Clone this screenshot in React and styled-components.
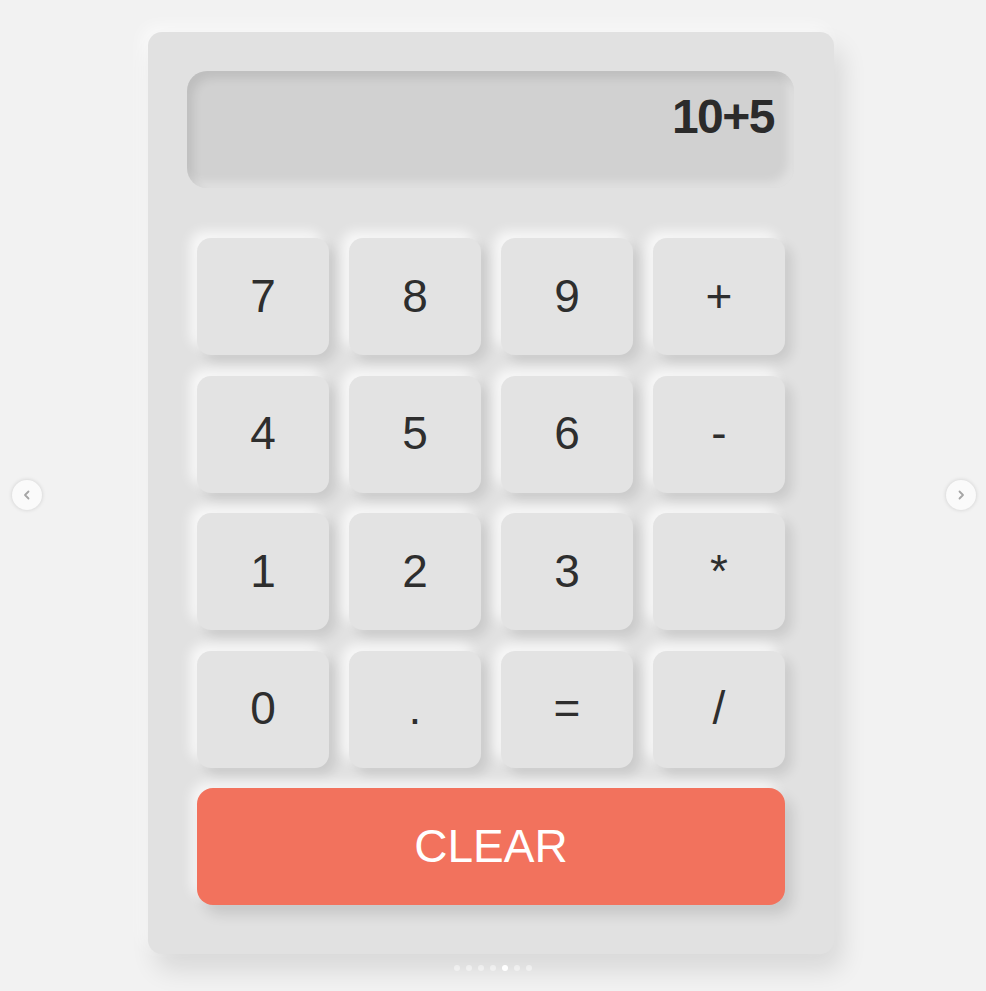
import React from "react";
import styled, { createGlobalStyle } from "styled-components";

const GlobalStyle = createGlobalStyle`
  html, body {
    margin: 0;
    padding: 0;
    background: #f2f2f2;
    font-family: "Liberation Sans", Arial, sans-serif;
  }
`;

const Page = styled.div`
  position: relative;
  width: 986px;
  height: 991px;
  display: flex;
  flex-direction: column;
  align-items: center;
  padding: 32px 4px 0 0;
  box-sizing: border-box;
  overflow: hidden;
`;

const Calculator = styled.div`
  width: 686px;
  box-sizing: border-box;
  padding: 39px 40px 49px 39px;
  background: #e1e1e1;
  border-radius: 14px;
  box-shadow: 8px 16px 26px rgba(0, 0, 0, 0.11),
    -6px -6px 16px rgba(255, 255, 255, 0.6);
`;

const Display = styled.div`
  height: 117px;
  box-sizing: border-box;
  border-radius: 20px;
  background: #d1d1d1;
  box-shadow: inset 6px 7px 10px rgba(0, 0, 0, 0.09),
    inset -6px -6px 10px rgba(255, 255, 255, 0.35);
  display: flex;
  align-items: flex-start;
  justify-content: flex-end;
  padding: 22px 20px 0 0;
  font-size: 48px;
  line-height: 1;
  font-weight: 700;
  color: #2b2b2b;
  letter-spacing: -1.5px;
`;

const Keys = styled.div`
  margin: 50px 0 0 10px;
  width: 588px;
  display: grid;
  grid-template-columns: repeat(4, 132px);
  grid-auto-rows: 117px;
  column-gap: 20px;
  row-gap: 20.5px;
`;

const Key = styled.button`
  border: none;
  border-radius: 14px;
  background: #e3e3e3;
  color: #2e2e2e;
  font-family: "Liberation Sans", Arial, sans-serif;
  font-size: 46px;
  padding: 0 0 2px;
  box-shadow: 7px 7px 12px rgba(0, 0, 0, 0.1),
    -7px -7px 12px rgba(255, 255, 255, 0.75);
  cursor: pointer;
`;

const Clear = styled.button`
  grid-column: 1 / -1;
  margin-top: -0.5px;
  border: none;
  border-radius: 16px;
  background: #f2725d;
  color: #ffffff;
  font-family: "Liberation Sans", Arial, sans-serif;
  font-size: 46px;
  padding: 0;
  box-shadow: 7px 9px 14px rgba(0, 0, 0, 0.12),
    -6px -6px 12px rgba(255, 255, 255, 0.7);
  cursor: pointer;
`;

const Arrow = styled.div`
  position: absolute;
  top: 480px;
  ${(p) => (p.$side === "left" ? "left: 12px;" : "right: 10px;")}
  width: 30px;
  height: 30px;
  border-radius: 50%;
  background: #fafafa;
  box-shadow: 0 0 4px rgba(0, 0, 0, 0.15);
  display: flex;
  align-items: center;
  justify-content: center;
  color: #a5a5a5;
`;

const Dots = styled.div`
  position: absolute;
  top: 965px;
  left: 0;
  right: 0;
  display: flex;
  justify-content: center;
  gap: 6px;
`;

const Dot = styled.span`
  width: 6px;
  height: 6px;
  border-radius: 50%;
  background: ${(p) => (p.$active ? "#ffffff" : "rgba(255,255,255,0.45)")};
`;

const keys = ["7", "8", "9", "+", "4", "5", "6", "-", "1", "2", "3", "*", "0", ".", "=", "/"];

const Chevron = ({ dir }) => (
  <svg width="12" height="12" viewBox="0 0 12 12" fill="none">
    <path
      d={dir === "left" ? "M7.5 2.5 L4 6 L7.5 9.5" : "M4.5 2.5 L8 6 L4.5 9.5"}
      stroke="currentColor"
      strokeWidth="1.8"
      strokeLinecap="round"
      strokeLinejoin="round"
    />
  </svg>
);

const App = () => {
  return (
    <>
      <GlobalStyle />
      <Page>
        <Calculator>
          <Display>10+5</Display>
          <Keys>
            {keys.map((k) => (
              <Key key={k}>{k}</Key>
            ))}
            <Clear>CLEAR</Clear>
          </Keys>
        </Calculator>
        <Arrow $side="left">
          <Chevron dir="left" />
        </Arrow>
        <Arrow $side="right">
          <Chevron dir="right" />
        </Arrow>
        <Dots>
          {[0, 1, 2, 3, 4, 5, 6].map((i) => (
            <Dot key={i} $active={i === 4} />
          ))}
        </Dots>
      </Page>
    </>
  );
};

export default App;
